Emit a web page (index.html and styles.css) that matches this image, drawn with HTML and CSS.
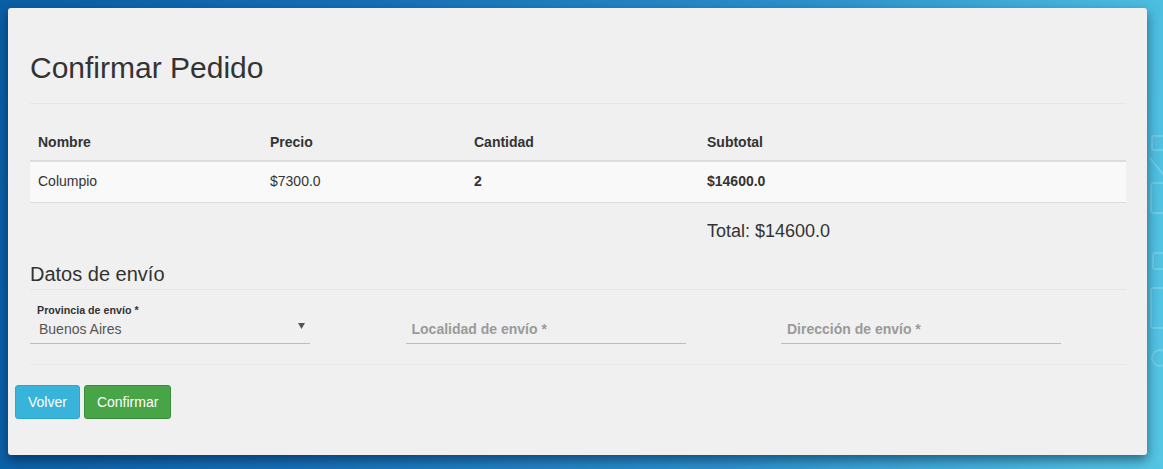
FILE: index.html
```html
<!DOCTYPE html>
<html lang="es">
<head>
<meta charset="utf-8">
<title>Confirmar Pedido</title>
<link rel="stylesheet" href="styles.css">
</head>
<body>
<svg class="bg-deco" width="20" height="260" viewBox="0 0 20 260" aria-hidden="true">
  <g fill="none" stroke="#ffffff" stroke-opacity="0.18" stroke-width="2">
    <rect x="4" y="8" width="14" height="14" rx="2"/>
    <path d="M2 30 L18 50"/>
    <rect x="3" y="55" width="16" height="30" rx="3"/>
    <rect x="5" y="125" width="12" height="16" rx="2"/>
    <rect x="3" y="160" width="16" height="40" rx="2"/>
    <circle cx="12" cy="230" r="8"/>
  </g>
</svg>
<div class="card">
  <div class="content">
    <div class="page-header"><h1>Confirmar Pedido</h1></div>
    <table class="order">
      <colgroup>
        <col class="c1"><col class="c2"><col class="c3"><col class="c4">
      </colgroup>
      <thead>
        <tr><th>Nombre</th><th>Precio</th><th>Cantidad</th><th>Subtotal</th></tr>
      </thead>
      <tbody>
        <tr><td>Columpio</td><td>$7300.0</td><td><b>2</b></td><td><b>$14600.0</b></td></tr>
      </tbody>
      <tfoot>
        <tr><td colspan="3"></td><td class="total">Total: $14600.0</td></tr>
      </tfoot>
    </table>
    <h2 class="section">Datos de envío</h2>
    <form class="shipping">
      <div class="field">
        <label class="flabel" for="prov">Provincia de envío *</label>
        <div class="select-wrap">
          <select id="prov" class="select"><option>Buenos Aires</option></select>
          <svg class="caret" width="7" height="6" viewBox="0 0 7 6"><path d="M0 0H7L3.5 6Z" fill="#555"/></svg>
        </div>
      </div>
      <div class="field">
        <span class="flabel"></span>
        <input class="input" type="text" placeholder="Localidad de envío *">
      </div>
      <div class="field">
        <span class="flabel"></span>
        <input class="input" type="text" placeholder="Dirección de envío *">
      </div>
    </form>
  </div>
  <div class="actions">
    <button class="btn btn-info" type="button">Volver</button>
    <button class="btn btn-success" type="button">Confirmar</button>
  </div>
</div>
</body>
</html>
```
FILE: styles.css
```css
html, body {
  margin: 0;
  height: 100%;
}
body {
  position: relative;
  padding: 8px 16px 0 8px;
  box-sizing: border-box;
  background: linear-gradient(100deg, #0a5ea4 0%, #1670b6 30%, #2c92cc 65%, #4bbde0 92%, #55c6e4 100%);
  font-family: "Liberation Sans", Arial, sans-serif;
  font-size: 14px;
  color: #333;
  overflow: hidden;
}
.bg-deco {
  position: absolute;
  left: 1148px;
  top: 128px;
}
.card {
  position: relative;
  width: 1139px;
  background: #f0f0f0;
  border-radius: 3px;
  box-shadow: 0 5px 12px rgba(0, 10, 40, 0.5);
  padding-bottom: 36px;
}
.content {
  padding: 0 21px 0 22px;
}
.page-header {
  padding: 42px 0 17px;
  border-bottom: 1px solid #e7e7e7;
}
.page-header h1 {
  margin: 0;
  font-size: 30px;
  line-height: 36px;
  font-weight: normal;
  color: #333;
}
.order {
  margin-top: 18px;
  width: 1096px;
  table-layout: fixed;
  border-collapse: collapse;
}
.c1 { width: 232px; }
.c2 { width: 204px; }
.c3 { width: 233px; }
.c4 { width: 427px; }
.order th {
  text-align: left;
  font-weight: bold;
  padding: 10px 8px 8px;
  line-height: 20px;
  border-bottom: 2px solid #dcdcdc;
}
.order tbody td {
  background: #f9f9f9;
  padding: 9px 8px 11px;
  line-height: 20px;
  border-bottom: 1px solid #dcdcdc;
}
.order tfoot td {
  padding: 18px 8px 0;
  line-height: 20px;
}
.order .total {
  font-size: 18px;
}
.section {
  margin: 21px 0 0;
  font-size: 20px;
  line-height: 24px;
  font-weight: normal;
  color: #333;
  padding-bottom: 3px;
  border-bottom: 1px solid #e5e5e5;
}
.shipping {
  display: flex;
  gap: 95.5px;
  padding: 14px 0 20px;
  border-bottom: 1px solid #e9e9e9;
}
.field {
  width: 280px;
  display: flex;
  flex-direction: column;
}
.flabel {
  display: block;
  height: 13px;
  line-height: 13px;
  padding-left: 7px;
  font-size: 10.7px;
  font-weight: bold;
  color: #333;
}
.select-wrap {
  display: flex;
  align-items: flex-start;
  border-bottom: 1px solid #bdbdbd;
  height: 26px;
}
.select {
  flex: 1;
  -webkit-appearance: none;
  appearance: none;
  border: none;
  outline: none;
  background: transparent;
  font-family: "Liberation Sans", Arial, sans-serif;
  font-size: 14px;
  line-height: 20px;
  height: 26px;
  color: #555;
  padding: 1px 0 3px 9px;
  margin: 0;
}
.caret {
  margin: 6px 5px 0 0;
  flex: none;
}
.input {
  box-sizing: border-box;
  width: 280px;
  height: 27px;
  border: none;
  border-bottom: 1px solid #bdbdbd;
  background: transparent;
  outline: none;
  font-family: "Liberation Sans", Arial, sans-serif;
  font-size: 14px;
  line-height: 20px;
  padding: 2px 0 4px 6px;
  margin: 0;
  color: #555;
}
.input::placeholder {
  color: #9a9a9a;
  font-weight: bold;
}
.actions {
  display: flex;
  gap: 4px;
  padding: 20px 0 0 7px;
}
.btn {
  font-family: "Liberation Sans", Arial, sans-serif;
  font-size: 14px;
  line-height: 20px;
  padding: 6px 12px;
  border-radius: 3px;
  border: 1px solid transparent;
  color: #fff;
  cursor: pointer;
  margin: 0;
}
.btn-info {
  background: #38b3da;
  border-color: #2ea7cf;
}
.btn-success {
  background: #47a447;
  border-color: #3b8e3b;
}
```
